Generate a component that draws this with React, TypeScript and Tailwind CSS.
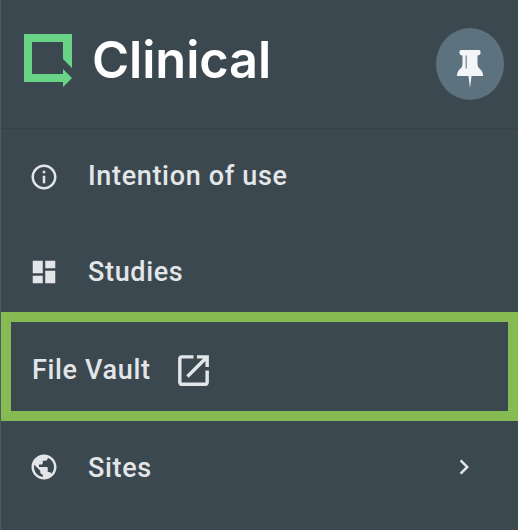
import React from "react";

const roboto = "font-['Roboto',sans-serif]";

function Icon({ d, className }: { d: string; className: string }) {
  return (
    <svg viewBox="0 0 24 24" className={className} fill="currentColor">
      <path d={d} />
    </svg>
  );
}

function Row({ icon, label, chevron, className, textClass }: { icon: string; label: string; chevron?: boolean; className: string; textClass: string }) {
  return (
    <div className={`flex items-center pl-[28px] pr-[39px] ${className}`}>
      <Icon d={icon} className="w-[30px] h-[30px] shrink-0" />
      <span className={`ml-[29px] text-[27px] font-medium tracking-[0.66px] ${textClass}`}>{label}</span>
      {chevron && (
        <Icon d="M10 6L8.59 7.41 13.17 12l-4.58 4.59L10 18l6-6z" className="ml-auto w-[30px] h-[30px]" />
      )}
    </div>
  );
}

export default function App() {
  return (
    <div className={`w-[518px] h-[530px] overflow-hidden bg-[#3c4850] border-l border-[#4f5b64] text-[#e3e6e8] ${roboto}`}>
      <header className="h-[129px] flex items-center border-b border-[#36414a] pl-[23px] pr-[14px]">
        <svg viewBox="0 0 48 53" className="w-[48px] h-[53px] shrink-0 -mt-[8px]">
          <path
            fill="#69d486"
            fillRule="evenodd"
            d="M0 0H48V34L39 25V8H8V40H39V35L48 44L39 53V48H0Z"
          />
        </svg>
        <span className="ml-[20px] -mt-[8px] text-[50.5px] leading-none font-semibold text-white tracking-[-0.1px] font-['Inter',sans-serif]">
          Clinical
        </span>
        <div className="ml-auto w-[68px] h-[72px] rounded-[50%] bg-[#5d727f] flex items-center justify-center -mt-[1px]">
          <svg viewBox="0 0 26 38" className="w-[26px] h-[38px] mt-[10px]">
            <path
              fill="#f4f5f6"
              d="M4 0H22Q23.500 0 23.500 1.500V3.500Q23.500 5 21 5.500H20.500V14Q20.500 17 22.500 18.500Q26 21 26 26H14.500L13 38L11.500 26H0Q0 21 3.500 18.500Q5.500 17 5.500 14V5.500H5Q2.500 5 2.500 3.500V1.500Q2.500 0 4 0Z"
            />
            <rect x="8.500" y="5.500" width="1.500" height="13" fill="#8a99a3" />
          </svg>
        </div>
      </header>
      <nav>
        <Row
          className="h-[96px]"
          textClass="-mt-[2px]"
          label="Intention of use"
          icon="M11 7h2v2h-2zm0 4h2v6h-2zm1-9C6.480 2 2 6.480 2 12s4.480 10 10 10 10-4.480 10-10S17.520 2 12 2zm0 18c-4.410 0-8-3.590-8-8s3.590-8 8-8 8 3.590 8 8-3.590 8-8 8z"
        />
        <Row
          className="h-[94px]"
          textClass="mt-0"
          label="Studies"
          icon="M3 13h8V3H3v10zm0 8h8v-6H3v6zm10 0h8V11h-8v10zm0-18v6h8V3h-8z"
        />
        <div className="-mt-[7px] h-[109px] border-[10px] border-[#86ba53] flex items-center pl-[21px] pt-[7px]">
          <span className="text-[27px] font-medium tracking-[0.66px]">File Vault</span>
          <Icon
            d="M19 19H5V5h7V3H5c-1.110 0-2 .9-2 2v14c0 1.100.89 2 2 2h14c1.100 0 2-.9 2-2v-7h-2v7zM14 3v2h3.590l-9.830 9.830 1.410 1.410L19 6.410V10h2V3h-7z"
            className="ml-[22px] w-[41px] h-[41px]"
          />
        </div>
        <Row
          className="h-[92px]"
          textClass="mt-[2px]"
          label="Sites"
          chevron
          icon="M12 2C6.480 2 2 6.480 2 12s4.480 10 10 10 10-4.480 10-10S17.520 2 12 2zm-1 17.930c-3.950-.49-7-3.850-7-7.930 0-.62.08-1.210.21-1.790L9 15v1c0 1.100.9 2 2 2v1.930zm6.900-2.540c-.26-.81-1-1.390-1.900-1.390h-1v-3c0-.55-.45-1-1-1H8v-2h2c.55 0 1-.45 1-1V7h2c1.100 0 2-.9 2-2v-.41c2.930 1.190 5 4.060 5 7.410 0 2.080-.8 3.970-2.100 5.390z"
        />
      </nav>
    </div>
  );
}
